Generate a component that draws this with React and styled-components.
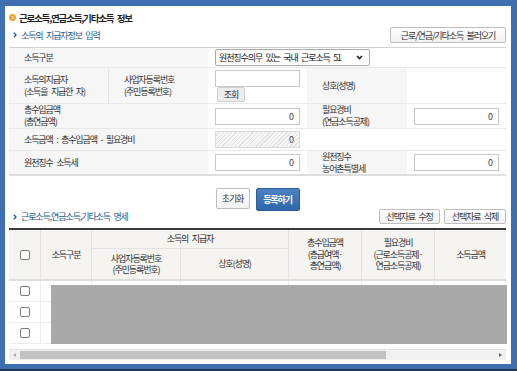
import styled, { createGlobalStyle } from "styled-components"

const GlobalStyle = createGlobalStyle`
    html, body {
        margin: 0;
        padding: 0;
    }

    body {
        background: #3e6fb0;
        font-family: "Noto Sans CJK KR", "Noto Sans", sans-serif;
        font-size: 9px;
        letter-spacing: -1.1px;
        word-spacing: 2.5px;
        color: #2e2e2e;
    }
`

const Frame = styled.div`
    width: 517px;
    height: 371px;
    box-sizing: border-box;
    padding: 6px 6px 0 5px;
    background: #3e6fb0;
    border-bottom: 2px solid #24364f;
`

const Panel = styled.div`
    height: 358px;
    box-sizing: border-box;
    padding: 5px 5px 0 4px;
    background: #fff;
    display: flex;
    flex-direction: column;
`

const Title = styled.h1`
    margin: 0;
    height: 13px;
    display: flex;
    align-items: center;
    gap: 3px;
    font-size: 9.5px;
    letter-spacing: -1.2px;
    font-weight: bold;
    color: #1e1e1e;
`

const SectionHead = styled.div`
    display: flex;
    align-items: center;
    justify-content: space-between;
    height: ${(p) => p.$h || 16}px;
    margin-top: ${(p) => p.$mt || 0}px;
`

const SectionTitle = styled.h2`
    margin: 0 0 0 4px;
    display: flex;
    align-items: center;
    gap: 4px;
    font-size: 9px;
    font-weight: normal;
    color: #235892;
`

const Buttons = styled.div`
    display: flex;
    gap: ${(p) => p.$gap || 4}px;
    justify-content: ${(p) => p.$center ? "center" : "flex-end"};
    align-items: flex-start;
`

const Button = styled.button`
    width: ${(p) => p.$w}px;
    height: ${(p) => p.$h || 16}px;
    padding: 0;
    box-sizing: border-box;
    border: 1px solid #bdbdbd;
    border-radius: 2px;
    background: linear-gradient(#ffffff, #f1f1f1);
    font-family: inherit;
    font-size: 9px;
    letter-spacing: -1.1px;
    word-spacing: 2.5px;
    color: #333;
    line-height: 1;
`

const PrimaryButton = styled(Button)`
    border-color: #2c5d9c;
    background: linear-gradient(#4c82c4, #2f66aa);
    color: #fff;
    font-weight: bold;
`

const LookupButton = styled(Button)`
    border-color: #cfcfcf;
    background: #ececec;
    margin: 0 0 0 2px;
`

const FormGrid = styled.div`
    margin-top: 4px;
    display: grid;
    grid-template-columns: 99px 100px 99px 100px 99px;
    grid-template-rows: 20px 36px 25px 22px 23px;
    border-top: 1px solid #d2d2d2;
    border-bottom: 2px solid #dedede;
`

const Cell = styled.div`
    grid-column: ${(p) => p.$span || "auto"};
    box-sizing: border-box;
    display: flex;
    flex-direction: column;
    justify-content: ${(p) => p.$top ? "flex-start" : "center"};
    align-items: flex-start;
    padding: ${(p) => p.$top ? "2px 0 0 7px" : p.$label ? "0 0 0 15px" : "0 0 0 7px"};
    background: ${(p) => p.$label ? "#f6f6f6" : "#fff"};
    border-bottom: ${(p) => p.$last ? "none" : "1px solid #e9e9e9"};
    border-left: ${(p) => p.$divider ? "1px solid #e4e4e4" : "none"};
    line-height: 12px;
`

const Field = styled.input`
    width: 85px;
    height: 17px;
    box-sizing: border-box;
    border: 1px solid #c8c8c8;
    padding: 0 5px 0 0;
    text-align: right;
    font-family: inherit;
    font-size: 9px;
    color: #444;
    background: ${(p) => p.$hatched
        ? "repeating-linear-gradient(135deg, #f6f6f6 0 2px, #e2e2e2 2px 3px)"
        : "#fff"};
    border-color: ${(p) => p.$hatched ? "#dadada" : "#c8c8c8"};
`

const SelectBox = styled.div`
    width: 155px;
    height: 17px;
    box-sizing: border-box;
    border: 1px solid #a9a9a9;
    border-radius: 2px;
    padding: 0 6px 0 3px;
    display: flex;
    align-items: center;
    justify-content: space-between;
    color: #222;
`

const ListTable = styled.div`
    margin-top: 4px;
    border-top: 2px solid #3a3a3a;
`

const cols = "32px 51px 89px 108px 73px 73px 71px"

const HeadGrid = styled.div`
    display: grid;
    grid-template-columns: ${cols};
    grid-template-rows: 19px 30px;
    border-bottom: 2px solid #dddddd;
    background: #f5f4f1;
`

const HeadCell = styled.div`
    grid-column: ${(p) => p.$col};
    grid-row: ${(p) => p.$row};
    display: flex;
    align-items: center;
    justify-content: center;
    text-align: center;
    line-height: 11.5px;
    border-right: ${(p) => p.$end ? "none" : "1px solid #e2e2e2"};
    border-bottom: ${(p) => p.$under ? "1px solid #e2e2e2" : "none"};
`

const Body = styled.div`
    position: relative;
`

const Row = styled.div`
    display: grid;
    grid-template-columns: ${cols};
    height: 20px;
    border-bottom: 1px solid #ececec;
`

const BodyCell = styled.div`
    display: flex;
    align-items: center;
    justify-content: center;
    border-right: ${(p) => p.$end ? "none" : "1px solid #ececec"};
`

const Check = styled.span`
    width: 8px;
    height: 8px;
    border: 1px solid #7a7a7a;
    border-radius: 2px;
    background: #fff;
`

const Mask = styled.div`
    position: absolute;
    left: 42px;
    right: -1px;
    top: 4px;
    bottom: 0;
    background: #a9a9a9;
`

const Scrollbar = styled.div`
    margin-top: 5px;
    height: 11px;
    display: flex;
    align-items: center;
    background: #f0f0f0;
    border-top: 1px solid #e4e4e4;
    box-sizing: border-box;
`

const Arrow = styled.span`
    width: 11px;
    display: flex;
    justify-content: center;

    &::before {
        content: "";
        border-top: 2.5px solid transparent;
        border-bottom: 2.5px solid transparent;
        ${(p) => p.$right
            ? "border-left: 3px solid #666;"
            : "border-right: 3px solid #aaa;"}
    }
`

const Thumb = styled.span`
    width: 366px;
    height: 8px;
    background: #c1c1c1;
`

const Spacer = styled.span`
    flex: 1;
`

function OrangeDot() {
    return (
        <svg width="7" height="7" viewBox="0 0 7 7">
            <circle cx="3.5" cy="3.5" r="3.5" fill="#f0a12b" />
            <path d="M2.8 2 L4.3 3.5 L2.8 5" stroke="#fff" strokeWidth="1" fill="none" />
        </svg>
    )
}

function Chevron() {
    return (
        <svg width="4" height="6" viewBox="0 0 4 6">
            <path d="M0.8 0.8 L3 3 L0.8 5.2" stroke="#235892" strokeWidth="1.3" fill="none" />
        </svg>
    )
}

function DropArrow() {
    return (
        <svg width="7" height="5" viewBox="0 0 7 5">
            <path d="M1 1 L3.5 3.5 L6 1" stroke="#222" strokeWidth="1.6" fill="none" />
        </svg>
    )
}

const rows = [0, 1, 2]

export default function App() {
    return (
        <>
            <GlobalStyle />
            <Frame>
                <Panel>
                    <Title><OrangeDot />근로소득,연금소득,기타소득 정보</Title>

                    <SectionHead $mt={3}>
                        <SectionTitle><Chevron />소득의 지급자정보 입력</SectionTitle>
                        <Button $w={116}>근로/연금/기타소득 불러오기</Button>
                    </SectionHead>

                    <FormGrid>
                        <Cell $label $span="1 / 3">소득구분</Cell>
                        <Cell $span="3 / 6">
                            <SelectBox>원천징수의무 있는 국내 근로소득 51<DropArrow /></SelectBox>
                        </Cell>

                        <Cell $label>소득의지급자<span>(소득을 지급한 자)</span></Cell>
                        <Cell $label $divider>사업자등록번호<span>(주민등록번호)</span></Cell>
                        <Cell $top>
                            <Field readOnly defaultValue="" />
                            <LookupButton $w={28} $h={15}>조회</LookupButton>
                        </Cell>
                        <Cell $label>상호(성명)</Cell>
                        <Cell />

                        <Cell $label $span="1 / 3">총수입금액<span>(총연금액)</span></Cell>
                        <Cell><Field readOnly defaultValue="0" /></Cell>
                        <Cell $label>필요경비<span>(연금소득공제)</span></Cell>
                        <Cell><Field readOnly defaultValue="0" /></Cell>

                        <Cell $label $span="1 / 3">소득금액 : 총수입금액 - 필요경비</Cell>
                        <Cell><Field $hatched readOnly defaultValue="0" /></Cell>
                        <Cell $span="4 / 6" />

                        <Cell $label $last $span="1 / 3">원천징수 소득세</Cell>
                        <Cell $last><Field readOnly defaultValue="0" /></Cell>
                        <Cell $label $last>원천징수<span>농어촌특별세</span></Cell>
                        <Cell $last><Field readOnly defaultValue="0" /></Cell>
                    </FormGrid>

                    <SectionHead $h={20} $mt={13}>
                        <Spacer />
                        <Buttons $center $gap={6}>
                            <Button $w={34} $h={21}>초기화</Button>
                            <PrimaryButton $w={44} $h={23}>등록하기</PrimaryButton>
                        </Buttons>
                        <Spacer />
                    </SectionHead>

                    <SectionHead $h={15}>
                        <SectionTitle><Chevron />근로소득,연금소득,기타소득 명세</SectionTitle>
                        <Buttons>
                            <Button $w={61} $h={15}>선택자료 수정</Button>
                            <Button $w={62} $h={15}>선택자료 삭제</Button>
                        </Buttons>
                    </SectionHead>

                    <ListTable>
                        <HeadGrid>
                            <HeadCell $col="1" $row="1 / 3"><Check /></HeadCell>
                            <HeadCell $col="2" $row="1 / 3">소득구분</HeadCell>
                            <HeadCell $col="3 / 5" $row="1" $under>소득의 지급자</HeadCell>
                            <HeadCell $col="3" $row="2">사업자등록번호<br />(주민등록번호)</HeadCell>
                            <HeadCell $col="4" $row="2">상호(성명)</HeadCell>
                            <HeadCell $col="5" $row="1 / 3">총수입금액<br />(총급여액·<br />총연금액)</HeadCell>
                            <HeadCell $col="6" $row="1 / 3">필요경비<br />(근로소득공제·<br />연금소득공제)</HeadCell>
                            <HeadCell $col="7" $row="1 / 3" $end>소득금액</HeadCell>
                        </HeadGrid>
                        <Body>
                            {rows.map((r) => (
                                <Row key={r}>
                                    <BodyCell><Check /></BodyCell>
                                    <BodyCell />
                                    <BodyCell />
                                    <BodyCell />
                                    <BodyCell />
                                    <BodyCell />
                                    <BodyCell $end />
                                </Row>
                            ))}
                            <Mask />
                        </Body>
                        <Scrollbar>
                            <Arrow />
                            <Thumb />
                            <Spacer />
                            <Arrow $right />
                        </Scrollbar>
                    </ListTable>
                </Panel>
            </Frame>
        </>
    )
}
